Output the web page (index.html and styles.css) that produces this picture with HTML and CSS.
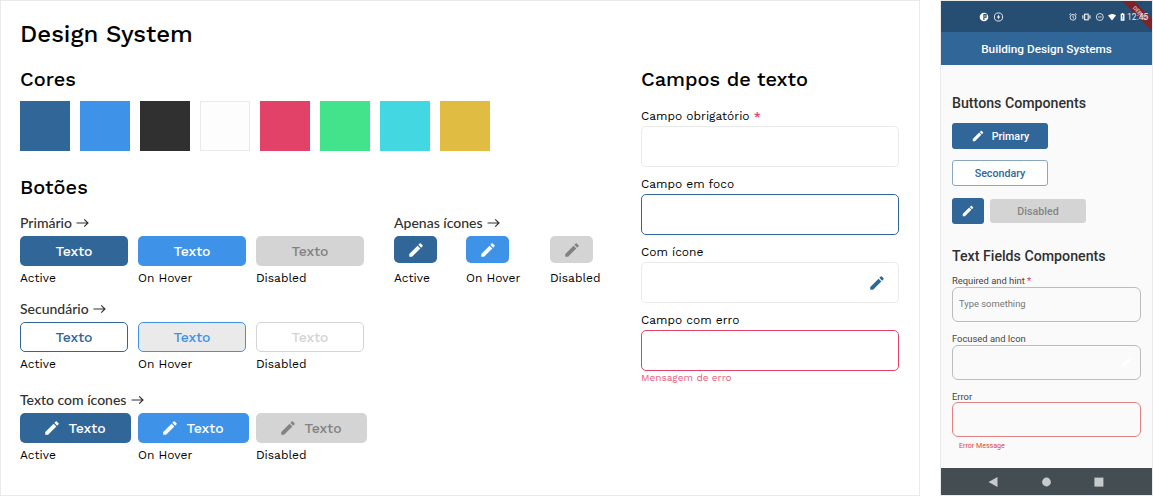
FILE: index.html
```html
<!DOCTYPE html>
<html lang="pt-BR">
<head>
<meta charset="utf-8">
<title>Design System</title>
<link rel="stylesheet" href="styles.css">
</head>
<body>
<svg class="defs" aria-hidden="true">
  <symbol id="pencil" viewBox="0 0 24 24"><path d="M3 17.25V21h3.75L17.81 9.94l-3.75-3.75L3 17.25zM20.71 7.04c.39-.39.39-1.02 0-1.41l-2.34-2.34c-.39-.39-1.02-.39-1.41 0l-1.83 1.83 3.75 3.75 1.83-1.83z"/></symbol>
  <symbol id="arrow" viewBox="0 0 13 10"><path d="M.5 5h11.3M8.2 1.3 12 5 8.2 8.7" fill="none" stroke="currentColor" stroke-width="1.15"/></symbol>
</svg>
<main class="board">
  <h1>Design System</h1>
  <div class="columns">
    <div class="left">
      <h2 class="t-cores">Cores</h2>
      <div class="swatches">
        <i class="sw navy"></i><i class="sw blue"></i><i class="sw dark"></i><i class="sw white"></i><i class="sw pink"></i><i class="sw green"></i><i class="sw cyan"></i><i class="sw gold"></i>
      </div>
      <h2 class="t-botoes">Botões</h2>
      <div class="groups">
        <div class="texts">
          <section>
            <h3>Primário <svg class="arrow"><use href="#arrow"/></svg></h3>
            <div class="row">
              <div><div class="btn navy">Texto</div><p>Active</p></div>
              <div><div class="btn blue">Texto</div><p>On Hover</p></div>
              <div><div class="btn off">Texto</div><p>Disabled</p></div>
            </div>
          </section>
          <section>
            <h3>Secundário <svg class="arrow"><use href="#arrow"/></svg></h3>
            <div class="row">
              <div><div class="btn line">Texto</div><p>Active</p></div>
              <div><div class="btn line hover">Texto</div><p>On Hover</p></div>
              <div><div class="btn line muted">Texto</div><p>Disabled</p></div>
            </div>
          </section>
          <section class="last">
            <h3>Texto com ícones <svg class="arrow"><use href="#arrow"/></svg></h3>
            <div class="row tight">
              <div><div class="btn wide navy"><svg class="pen"><use href="#pencil"/></svg>Texto</div><p>Active</p></div>
              <div><div class="btn wide blue"><svg class="pen"><use href="#pencil"/></svg>Texto</div><p>On Hover</p></div>
              <div><div class="btn wide off"><svg class="pen"><use href="#pencil"/></svg>Texto</div><p>Disabled</p></div>
            </div>
          </section>
        </div>
        <section class="icons">
          <h3>Apenas ícones <svg class="arrow"><use href="#arrow"/></svg></h3>
          <div class="row icon-row">
            <div><div class="btn square navy"><svg class="pen"><use href="#pencil"/></svg></div><p>Active</p></div>
            <div><div class="btn square blue"><svg class="pen"><use href="#pencil"/></svg></div><p>On Hover</p></div>
            <div><div class="btn square off"><svg class="pen"><use href="#pencil"/></svg></div><p>Disabled</p></div>
          </div>
        </section>
      </div>
    </div>
    <div class="fields">
      <h2 class="t-campos">Campos de texto</h2>
      <label>Campo obrigatório <b>*</b></label><div class="field"></div>
      <label>Campo em foco</label><div class="field focus"></div>
      <label>Com ícone</label><div class="field"><svg class="pen"><use href="#pencil"/></svg></div>
      <label>Campo com erro</label><div class="field error"></div>
      <small>Mensagem de erro</small>
    </div>
  </div>
</main>
<aside class="phone">
  <div class="status">
    <svg class="s-left" viewBox="0 0 26 12">
      <circle cx="6" cy="6" r="4.3" fill="#fff"/><path d="M5.9 8.9V3.6h2.2v2.7H6" fill="none" stroke="#264d72" stroke-width="1.1"/>
      <circle cx="20.5" cy="6" r="4.1" fill="none" stroke="#dfe6ed"/><path d="M21 3.2 18.8 6.5h1.5l-.3 2.3 2.3-3.3h-1.6z" fill="#fff"/>
    </svg>
    <svg class="s-right" viewBox="0 0 58 12">
      <g fill="none" stroke="#e3eaf0" stroke-width=".9">
        <circle cx="5" cy="6.3" r="2.9"/><path d="M5 4.6v2l1.2.6M1.3 3.7 3 2.3M8.7 3.7 7 2.3"/>
        <rect x="16.6" y="3.2" width="3.6" height="5.6" stroke-width="1.2"/><path d="M14.9 4.3v3.4M21.9 4.3v3.4" stroke-width="1.2"/>
        <circle cx="31.8" cy="6" r="3.5"/><path d="M30 6h3.6"/>
      </g>
      <path d="M40 4.4c2.5-2 5.6-2 8 0L44 9.4z" fill="#fff"/>
      <path d="M52.7 2.8h1.1V2h1.6v.8h1.1v6.9h-3.8z" fill="#fff"/><path d="M54.6 4v2.5M54.6 7.3v1" stroke="#264d72" stroke-width=".8"/>
    </svg>
    <div class="ribbon"><em>DEBUG</em></div>
    <span>12:45</span>
  </div>
  <header>Building Design Systems</header>
  <div class="screen">
    <h4>Buttons Components</h4>
    <div class="mbtn navy"><svg><use href="#pencil"/></svg>Primary</div>
    <div class="mbtn mline">Secondary</div>
    <div class="mrow"><div class="mbtn msq navy"><svg><use href="#pencil"/></svg></div><div class="mbtn moff">Disabled</div></div>
    <h4 class="second">Text Fields Components</h4>
    <label>Required and hint <b>*</b></label><div class="mfield">Type something</div>
    <label>Focused and Icon</label><div class="mfield"><svg><use href="#pencil"/></svg></div>
    <label class="l-error">Error</label><div class="mfield merror"></div>
    <small>Error Message</small>
  </div>
  <nav>
    <svg viewBox="0 0 211 27"><g fill="#c7cacc"><path d="M47.5 14 56.5 9v10z"/><circle cx="105.5" cy="14" r="4.4"/><rect x="153.4" y="9.6" width="9" height="9"/></g></svg>
  </nav>
</aside>
</body>
</html>
```
FILE: styles.css
```css
* { box-sizing: border-box; }
body { margin: 0; display: flex; gap: 20px; width: 1153px; height: 496px; overflow: hidden; background: #fff; font-family: "Work Sans", Inter, sans-serif; color: #000; }
h1, h2, h3, h4, p { margin: 0; }
svg { display: block; fill: currentColor; flex: none; }
.defs { position: absolute; width: 0; height: 0; }

.board { width: 920px; height: 496px; border: 1px solid #eaeaea; padding: 19px 20px 0 19px; flex: none; }
h1 { font-size: 24px; line-height: 28px; font-weight: 500; white-space: nowrap; }
h2 { font-size: 20px; line-height: 24px; font-weight: 500; white-space: nowrap; }
h3 { font: 500 14px/18px Lato, sans-serif; color: #303030; display: flex; align-items: center; gap: 4.5px; white-space: nowrap; }
.columns { display: flex; justify-content: space-between; padding-top: 19px; }
.arrow { width: 13px; height: 10px; }
.swatches { display: flex; gap: 10px; margin: 10px 0 24px; }
.sw { width: 50px; height: 50px; }
.navy { background: #316699; color: #fff; }
.blue { background: #3e93e9; color: #fff; }
.dark { background: #303030; }
.white { background: #fdfdfd; border: 1px solid #eaeaea; }
.pink { background: #e34268; }
.green { background: #43e38c; }
.cyan { background: #43d8e1; }
.gold { background: #e0bc43; }
.off { background: #d4d4d4; color: #828282; }

.groups { display: flex; gap: 27px; padding-top: 15px; }
.row { display: flex; gap: 10px; padding-top: 4px; }
.tight { gap: 7px; }
.btn { width: 108px; height: 30px; border-radius: 5px; display: flex; align-items: center; justify-content: center; font-size: 14px; font-weight: 500; }
.line { background: #fff; border: 1px solid #316699; color: #316699; }
.hover { background: #eaeaea; border-color: #3e93e9; color: #3e93e9; }
.muted { border-color: #d4d4d4; color: #d4d4d4; }
.wide { width: 111px; justify-content: flex-start; padding-left: 22.5px; gap: 8px; }
.square { width: 43px; height: 27px; }
.pen { width: 18px; height: 18px; }
p { font-size: 12px; line-height: 16px; margin-top: 4px; white-space: nowrap; }
.square + p { margin-top: 7px; }
section { height: 86px; }
.last { padding-top: 5px; }
.icon-row { gap: 0; }
.icon-row > div { width: 72px; }
.icon-row > div + div { width: 84px; }
.icon-row > div + div + div { width: 51px; }
.icons { width: 207px; }

.fields { width: 258px; }
.fields label { display: block; font-size: 12px; line-height: 16px; margin-top: 9px; margin-bottom: 2px; }
.fields .t-campos { margin-bottom: 17px; }
label b { color: #e34268; font-weight: 500; }
.fields label b { font-weight: 600; }
.field { height: 41px; border: 1px solid #eaeaea; border-radius: 5px; display: flex; align-items: center; justify-content: flex-end; padding-right: 12px; color: #316699; }
.focus { border-color: #316699; }
.error { border-color: #e34268; }
.fields small { display: block; font-size: 10px; line-height: 14px; color: #ea5a7c; }

.phone { width: 213px; height: 496px; border: 1px solid #eaeaea; background: #fafafa; font-family: Roboto, sans-serif; display: flex; flex-direction: column; flex: none; }
.status { height: 31px; background: #264d72; position: relative; overflow: hidden; display: flex; align-items: center; padding-left: 37px; color: #e3eaf0; font-size: 8.6px; }
.s-left { width: 26px; height: 12px; }
.s-right { width: 58px; height: 12px; margin-left: 64px; }
.status span { margin-left: 1px; position: relative; z-index: 1; }
.ribbon { position: absolute; width: 70px; height: 8px; right: -22.5px; top: 7.5px; background: #7c2428; transform: rotate(45deg); text-align: center; }
.ribbon em { font: 700 5.5px/8px Roboto, sans-serif; color: #d8b6b9; display: block; }
.phone header { height: 33px; background: #316699; color: #fff; font-size: 11.8px; font-weight: 500; text-align: center; line-height: 34px; }
.screen { height: 403px; padding: 29px 11px 0; }
h4 { font-size: 14.2px; font-weight: 500; line-height: 18px; color: #303030; white-space: nowrap; }
.mbtn { width: 96px; height: 26px; border-radius: 3px; display: flex; align-items: center; justify-content: center; gap: 7px; font-size: 10.7px; font-weight: 500; }
.mbtn svg { width: 14px; height: 14px; }
h4 + .mbtn { margin: 11px 0 11px; }
.mline { background: #fff; border: 1px solid #88a7c5; color: #316699; }
.mrow { display: flex; gap: 6px; align-items: center; margin: 12px 0 23px; }
.msq { width: 32px; }
.moff { height: 24px; background: #d4d4d4; color: #858585; }
.phone label { display: block; font-size: 9.4px; line-height: 12px; color: #444; }
.second + label { margin-top: 10px; }
.mfield { height: 35px; border: 1px solid #bcbcbc; border-radius: 6px; padding: 0 6px; display: flex; align-items: center; font-size: 9.4px; line-height: 12px; color: #777; margin-bottom: 11px; padding-bottom: 1px; }
.mfield svg { width: 14px; height: 14px; margin-left: auto; color: #fff; }
.phone .l-error { line-height: 11px; }
.merror { border-color: #e38282; margin-bottom: 3px; }
.phone small { display: block; font-size: 7.1px; line-height: 11px; color: #dc4545; padding-left: 7px; }
nav { height: 27px; background: #444e52; }
nav svg { width: 211px; height: 27px; }
```
